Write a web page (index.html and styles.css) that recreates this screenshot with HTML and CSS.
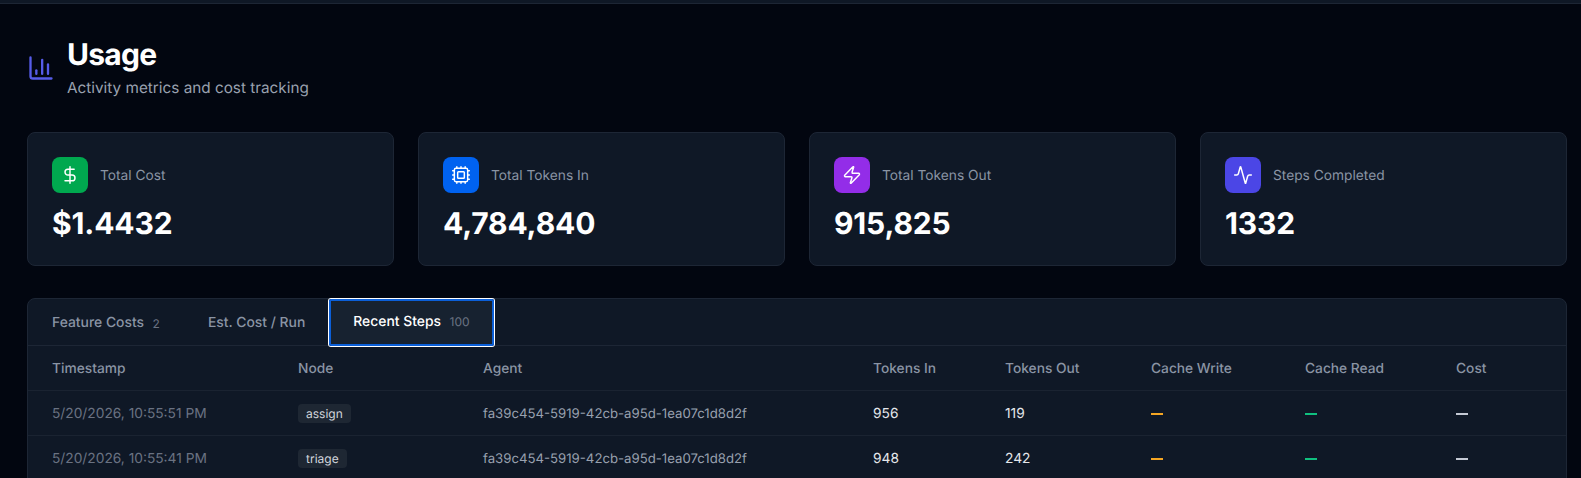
FILE: index.html
```html
<!DOCTYPE html>
<html>
  <head>
    <meta charset="utf-8">
    <title>Usage</title>
    <link rel="stylesheet" href="styles.css">
  </head>
  <body>
    <div class="topbar"></div>
    <main class="page">
      <header class="head">
        <svg class="head-icon" viewBox="0 0 24 24"><path d="M3 3v16a2 2 0 0 0 2 2h16"/><path d="M18 17V9"/><path d="M13 17V5"/><path d="M8 17v-3"/></svg>
        <div>
          <h1 class="title">Usage</h1>
          <p class="sub">Activity metrics and cost tracking</p>
        </div>
      </header>

      <section class="stats">
        <div class="card">
          <div class="card-top">
            <div class="ico green"><svg viewBox="0 0 24 24"><path d="M12 2v20"/><path d="M17 5H9.5a3.5 3.5 0 0 0 0 7h5a3.5 3.5 0 0 1 0 7H6"/></svg></div>
            <span class="label">Total Cost</span>
          </div>
          <div class="value">$1.4432</div>
        </div>
        <div class="card">
          <div class="card-top">
            <div class="ico blue"><svg viewBox="0 0 24 24"><path d="M12 20v2M12 2v2M17 20v2M17 2v2M2 12h2M2 17h2M2 7h2M20 12h2M20 17h2M20 7h2M7 20v2M7 2v2"/><rect x="4" y="4" width="16" height="16" rx="2"/><rect x="8" y="8" width="8" height="8" rx="1"/></svg></div>
            <span class="label">Total Tokens In</span>
          </div>
          <div class="value">4,784,840</div>
        </div>
        <div class="card">
          <div class="card-top">
            <div class="ico purple"><svg viewBox="0 0 24 24"><path d="M4 14a1 1 0 0 1-.78-1.63l9.9-10.2a.5.5 0 0 1 .86.46l-1.92 6.02A1 1 0 0 0 13 10h7a1 1 0 0 1 .78 1.63l-9.9 10.2a.5.5 0 0 1-.86-.46l1.92-6.02A1 1 0 0 0 11 14z"/></svg></div>
            <span class="label">Total Tokens Out</span>
          </div>
          <div class="value">915,825</div>
        </div>
        <div class="card">
          <div class="card-top">
            <div class="ico indigo"><svg viewBox="0 0 24 24"><path d="M22 12h-2.48a2 2 0 0 0-1.93 1.46l-2.35 8.36a.25.25 0 0 1-.48 0L9.24 2.18a.25.25 0 0 0-.48 0l-2.35 8.36A2 2 0 0 1 4.49 12H2"/></svg></div>
            <span class="label">Steps Completed</span>
          </div>
          <div class="value">1332</div>
        </div>
      </section>

      <section class="panel">
        <div class="tabs">
          <div class="tab">Feature Costs <span class="count">2</span></div>
          <div class="tab">Est. Cost / Run</div>
          <div class="tab active">Recent Steps <span class="count">100</span></div>
        </div>
        <table class="steps">
          <colgroup>
            <col class="c-time"><col class="c-node"><col class="c-agent"><col class="c-in"><col class="c-out"><col class="c-write"><col class="c-read"><col class="c-cost">
          </colgroup>
          <thead>
            <tr>
              <th>Timestamp</th><th>Node</th><th>Agent</th><th>Tokens In</th><th>Tokens Out</th><th>Cache Write</th><th>Cache Read</th><th>Cost</th>
            </tr>
          </thead>
          <tbody>
            <tr>
              <td class="time">5/20/2026, 10:55:51 PM</td>
              <td><span class="badge">assign</span></td>
              <td class="agent">fa39c454-5919-42cb-a95d-1ea07c1d8d2f</td>
              <td>956</td>
              <td>119</td>
              <td><span class="dash amber"></span></td>
              <td><span class="dash mint"></span></td>
              <td><span class="dash"></span></td>
            </tr>
            <tr>
              <td class="time">5/20/2026, 10:55:41 PM</td>
              <td><span class="badge">triage</span></td>
              <td class="agent">fa39c454-5919-42cb-a95d-1ea07c1d8d2f</td>
              <td>948</td>
              <td>242</td>
              <td><span class="dash amber"></span></td>
              <td><span class="dash mint"></span></td>
              <td><span class="dash"></span></td>
            </tr>
          </tbody>
        </table>
      </section>
    </main>
  </body>
</html>
```

FILE: styles.css
```css
html, body {
  margin: 0;
  height: 100%;
  overflow: hidden;
}
body {
  background: #020610;
  color: #fff;
  font-family: Inter, "Liberation Sans", sans-serif;
  text-rendering: geometricPrecision;
}
.topbar {
  height: 3px;
  background: #0f1826;
  border-bottom: 1px solid #1d2635;
}
.page {
  padding: 33px 14px 0 27px;
}

/* header */
.head {
  display: flex;
  align-items: center;
  gap: 12px;
  height: 62px;
  margin-bottom: 33px;
}
.head-icon {
  width: 28px;
  height: 28px;
  fill: none;
  stroke: #565ce8;
  stroke-width: 2;
  stroke-linecap: round;
  stroke-linejoin: round;
}
.title {
  margin: 0;
  font-size: 30px;
  line-height: 36px;
  font-weight: 700;
  letter-spacing: -0.75px;
}
.sub {
  margin: 4px 0 0;
  font-size: 15.3px;
  line-height: 22px;
  color: #99a1af;
}

/* stat cards */
.stats {
  display: grid;
  grid-template-columns: repeat(4, 1fr);
  gap: 24px;
  margin-bottom: 32px;
}
.card {
  background: #0f1826;
  border: 1px solid #1d2635;
  border-radius: 8px;
  padding: 24px;
  height: 134px;
  box-sizing: border-box;
}
.card-top {
  display: flex;
  align-items: center;
  gap: 12px;
  margin-bottom: 13px;
}
.ico {
  width: 36px;
  height: 36px;
  border-radius: 8px;
  display: flex;
  align-items: center;
  justify-content: center;
}
.ico svg {
  width: 20px;
  height: 20px;
  fill: none;
  stroke: #fff;
  stroke-width: 1.75;
  stroke-linecap: round;
  stroke-linejoin: round;
}
.green { background: #00a84f; }
.blue { background: #0062f0; }
.purple { background: #932de8; }
.indigo { background: #4b46e6; }
.label {
  padding-top: 1px;
  font-size: 13.75px;
  color: #8a94a4;
}
.value {
  font-size: 30px;
  line-height: 36px;
  font-weight: 700;
  letter-spacing: -0.15px;
}

/* tabs + table */
.panel {
  background: #0f1826;
  border: 1px solid #1d2635;
  border-radius: 8px 8px 0 0;
}
.tabs {
  display: flex;
  height: 46px;
  border-bottom: 1px solid #1d2635;
}
.tab {
  padding: 2px 24px 0;
  display: flex;
  align-items: center;
  gap: 8.5px;
  font-size: 13.9px;
  font-weight: 500;
  color: #8a94a4;
}
.tab.active {
  color: #fff;
  background: #172230;
  padding: 0 24px 2px;
  box-sizing: border-box;
  height: 47px;
  border-radius: 2px;
  box-shadow: inset 0 0 0 2px #0b5fd8, 0 0 0 1px #fff;
}
.count {
  font-size: 12px;
  font-weight: 400;
  color: #6a7282;
}
.steps {
  width: 100%;
  table-layout: fixed;
  border-collapse: separate;
  border-spacing: 0;
  font-size: 13.75px;
}
.c-time { width: 246px; }
.c-node { width: 185px; }
.c-agent { width: 390px; }
.c-in { width: 132px; }
.c-out { width: 146px; }
.c-write { width: 154px; }
.c-read { width: 151px; }
.steps th, .steps td {
  box-sizing: border-box;
  height: 45px;
  padding: 2px 0 0 24px;
  text-align: left;
  border-bottom: 1px solid #1a2331;
  color: #e5e7eb;
}
.steps th {
  font-weight: 500;
  color: #8a94a4;
}
.steps td.time { color: #6a7282; }
.steps td.agent {
  color: #99a1af;
  font-size: 13.2px;
}
.dash {
  display: block;
  width: 12px;
  height: 2px;
  background: #c4c9d4;
}
.dash.amber { background: #f5a623; }
.dash.mint { background: #10c07f; }
.badge {
  display: inline-block;
  padding: 0 8px;
  margin-top: -2px;
  line-height: 19px;
  border-radius: 4px;
  background: #1e2733;
  font-size: 12px;
  color: #d1d5dc;
}
```
